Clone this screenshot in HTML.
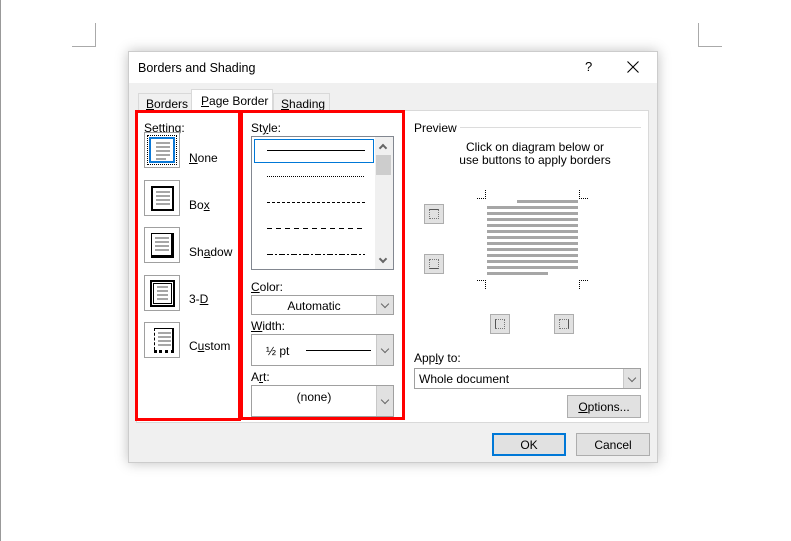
<!DOCTYPE html>
<html><head><meta charset="utf-8"><style>
*{box-sizing:border-box;margin:0;padding:0}
body{width:791px;height:541px;background:#fff;position:relative;overflow:hidden;font-family:"Liberation Sans",sans-serif;font-size:12px;color:#000}
.a{position:absolute}
u{text-decoration:underline}
.dlg{left:128px;top:51px;width:530px;height:412px;background:#f0f0f0;border:1px solid #ccc;box-shadow:0 0 12px rgba(0,0,0,.25)}
.combo{background:#fff;border:1px solid #a0a0a0}
.combo .dd{position:absolute;right:0;top:0;bottom:0;width:17px;background:#e1e1e1;border-left:1px solid #c8c8c8}
.combo .dd:after{content:"";position:absolute;left:5px;top:50%;margin-top:-4px;width:5px;height:5px;border-right:1px solid #666;border-bottom:1px solid #666;transform:rotate(45deg)}
.btn{background:#e1e1e1;border:1px solid #adadad;text-align:center}
.ic{width:36px;height:36px;border:1px solid #a0a0a0;background:#fff}
.gl{position:absolute;background:#a6a6a6;height:3px}
.pb{width:20px;height:20px;background:#e1e1e1;border:1px solid #adadad}
.pb i{position:absolute;left:4px;top:4px;width:10px;height:10px;border:1px dotted #777}
</style></head><body>
<div class="a" style="left:0;top:0;width:1px;height:541px;background:#999"></div>
<div class="a" style="left:95px;top:23px;width:1px;height:24px;background:#aaa"></div>
<div class="a" style="left:72px;top:46px;width:24px;height:1px;background:#aaa"></div>
<div class="a" style="left:698px;top:23px;width:1px;height:24px;background:#aaa"></div>
<div class="a" style="left:698px;top:46px;width:24px;height:1px;background:#aaa"></div>

<div class="a dlg">
 <div class="a" style="left:0;top:0;width:528px;height:31px;background:#fff"></div>
 <div class="a" style="left:9px;top:9px;font-size:12.5px">Borders and Shading</div>
 <div class="a" style="left:456px;top:7px;font-size:13px">?</div>
 <svg class="a" style="left:498px;top:9px" width="12" height="12"><path d="M0.5 0.5L11.5 11.5M11.5 0.5L0.5 11.5" stroke="#000" stroke-width="1.1"/></svg>
</div>
<!-- tabs -->
<div class="a" style="left:138px;top:93px;width:54px;height:18px;border:1px solid #d9d9d9;border-bottom:none;background:#f0f0f0;padding:3px 0 0 7px"><u>B</u>orders</div>
<div class="a" style="left:273px;top:93px;width:57px;height:18px;border:1px solid #d9d9d9;border-bottom:none;background:#f0f0f0;padding:3px 0 0 7px"><u>S</u>hading</div>
<div class="a" style="left:136px;top:110px;width:513px;height:313px;background:#fff;border:1px solid #d9d9d9"></div>
<div class="a" style="left:191px;top:89px;width:82px;height:23px;border:1px solid #d9d9d9;border-bottom:none;background:#fff;padding:4px 0 0 9px"><u>P</u>age Border</div>

<!-- red boxes -->
<div class="a" style="left:135px;top:110px;width:106px;height:311px;border:3px solid #f00"></div>
<div class="a" style="left:240px;top:110px;width:165px;height:310px;border:3px solid #f00"></div>

<div class="a" style="left:144px;top:121px">Setting:</div>
<!-- icons -->
<div class="a ic" style="left:144px;top:132px;padding:2px"><div style="width:30px;height:30px;border:1px dotted #000;padding:1px"><div style="width:26px;height:26px;border:2px solid #0a78d7;position:relative">
 <div class="gl" style="left:5px;top:3px;width:14px;height:2px"></div><div class="gl" style="left:5px;top:7px;width:14px;height:2px"></div><div class="gl" style="left:5px;top:11px;width:14px;height:2px"></div><div class="gl" style="left:5px;top:15px;width:14px;height:2px"></div><div class="gl" style="left:5px;top:19px;width:10px;height:2px"></div></div></div></div>
<div class="a" style="left:189px;top:151px"><u>N</u>one</div>

<div class="a ic" style="left:144px;top:180px"><div class="a" style="left:6px;top:5px;width:23px;height:25px;border:2px solid #000">
 <div class="gl" style="left:3px;top:3px;width:14px;height:2px"></div><div class="gl" style="left:3px;top:7px;width:14px;height:2px"></div><div class="gl" style="left:3px;top:11px;width:14px;height:2px"></div><div class="gl" style="left:3px;top:15px;width:14px;height:2px"></div></div></div>
<div class="a" style="left:189px;top:198px">Bo<u>x</u></div>

<div class="a ic" style="left:144px;top:227px"><div class="a" style="left:6px;top:5px;width:23px;height:25px;border:1px solid #000;border-right:3px solid #000;border-bottom:3px solid #000">
 <div class="gl" style="left:3px;top:3px;width:14px;height:2px"></div><div class="gl" style="left:3px;top:7px;width:14px;height:2px"></div><div class="gl" style="left:3px;top:11px;width:14px;height:2px"></div><div class="gl" style="left:3px;top:15px;width:14px;height:2px"></div></div></div>
<div class="a" style="left:189px;top:245px">Sh<u>a</u>dow</div>

<div class="a ic" style="left:144px;top:275px"><div class="a" style="left:5px;top:4px;width:25px;height:27px;border:2px solid #000;padding:1px"><div style="width:19px;height:21px;border:1px solid #000;position:relative">
 <div class="gl" style="left:3px;top:2px;width:11px;height:2px"></div><div class="gl" style="left:3px;top:6px;width:11px;height:2px"></div><div class="gl" style="left:3px;top:10px;width:11px;height:2px"></div><div class="gl" style="left:3px;top:14px;width:11px;height:2px"></div></div></div></div>
<div class="a" style="left:189px;top:292px">3-<u>D</u></div>

<div class="a ic" style="left:144px;top:322px"><div class="a" style="left:9px;top:5px;width:20px;height:22px;border-top:1px solid #000;border-right:2px solid #000;border-left:1px dashed #000">
 <div class="gl" style="left:3px;top:3px;width:13px;height:2px"></div><div class="gl" style="left:3px;top:7px;width:13px;height:2px"></div><div class="gl" style="left:3px;top:11px;width:13px;height:2px"></div><div class="gl" style="left:3px;top:15px;width:13px;height:2px"></div></div>
 <div class="a" style="left:9px;top:27px;width:20px;height:3px;border-top:3px dotted #000"></div></div>
<div class="a" style="left:189px;top:339px">C<u>u</u>stom</div>

<!-- style -->
<div class="a" style="left:251px;top:121px">St<u>y</u>le:</div>
<div class="a" style="left:251px;top:136px;width:143px;height:134px;border:1px solid #828790;background:#fff"></div>
<div class="a" style="left:254px;top:139px;width:120px;height:24px;border:1px solid #0078d7"></div>
<div class="a" style="left:267px;top:150px;width:98px;height:0;border-top:1px solid #000"></div>
<div class="a" style="left:267px;top:176px;width:97px;border-top:1px dotted #000"></div>
<div class="a" style="left:267px;top:202px;width:98px;border-top:1px dashed #000"></div>
<div class="a" style="left:267px;top:228px;width:98px;height:1px;background:repeating-linear-gradient(90deg,#000 0 5px,transparent 5px 9px)"></div>
<div class="a" style="left:267px;top:254px;width:98px;height:1px;background:repeating-linear-gradient(90deg,#000 0 6px,transparent 6px 8px,#000 8px 10px,transparent 10px 12px)"></div>
<div class="a" style="left:375px;top:137px;width:18px;height:132px;background:#f0f0f0"></div>
<div class="a" style="left:376px;top:155px;width:15px;height:20px;background:#cdcdcd"></div>
<div class="a" style="left:380px;top:145px;width:6px;height:6px;border-left:2px solid #666;border-top:2px solid #666;transform:rotate(45deg)"></div>
<div class="a" style="left:380px;top:256px;width:6px;height:6px;border-right:2px solid #666;border-bottom:2px solid #666;transform:rotate(45deg)"></div>

<div class="a" style="left:251px;top:280px"><u>C</u>olor:</div>
<div class="a combo" style="left:251px;top:295px;width:143px;height:20px"><div class="a" style="left:0;right:17px;top:3px;text-align:center">Automatic</div><div class="dd"></div></div>
<div class="a" style="left:251px;top:319px"><u>W</u>idth:</div>
<div class="a combo" style="left:251px;top:334px;width:143px;height:32px"><div class="a" style="left:14px;top:9px">½ pt</div><div class="a" style="left:54px;top:15px;width:65px;border-top:1px solid #000"></div><div class="dd"></div></div>
<div class="a" style="left:251px;top:370px">A<u>r</u>t:</div>
<div class="a combo" style="left:251px;top:385px;width:143px;height:32px"><div class="a" style="left:0;right:17px;top:4px;text-align:center">(none)</div><div class="dd"></div></div>

<!-- preview -->
<div class="a" style="left:414px;top:121px">Preview</div>
<div class="a" style="left:460px;top:127px;width:181px;height:1px;background:#dcdcdc"></div>
<div class="a" style="left:430px;top:141px;width:210px;text-align:center;line-height:13px">Click on diagram below or<br>use buttons to apply borders</div>
<div class="gl" style="left:517px;top:200px;width:61px"></div>
<div class="gl" style="left:487px;top:206px;width:91px"></div>
<div class="gl" style="left:487px;top:212px;width:91px"></div>
<div class="gl" style="left:487px;top:218px;width:91px"></div>
<div class="gl" style="left:487px;top:224px;width:91px"></div>
<div class="gl" style="left:487px;top:230px;width:91px"></div>
<div class="gl" style="left:487px;top:236px;width:91px"></div>
<div class="gl" style="left:487px;top:242px;width:91px"></div>
<div class="gl" style="left:487px;top:248px;width:91px"></div>
<div class="gl" style="left:487px;top:254px;width:91px"></div>
<div class="gl" style="left:487px;top:260px;width:91px"></div>
<div class="gl" style="left:487px;top:266px;width:91px"></div>
<div class="gl" style="left:487px;top:272px;width:61px"></div>
<div class="a" style="left:477px;top:190px;width:9px;height:9px;border-right:1px dotted #000;border-bottom:1px dotted #000"></div>
<div class="a" style="left:579px;top:190px;width:9px;height:9px;border-left:1px dotted #000;border-bottom:1px dotted #000"></div>
<div class="a" style="left:477px;top:280px;width:9px;height:9px;border-right:1px dotted #000;border-top:1px dotted #000"></div>
<div class="a" style="left:579px;top:280px;width:9px;height:9px;border-left:1px dotted #000;border-top:1px dotted #000"></div>
<div class="a pb" style="left:424px;top:204px"><i style="border-top:1px solid #555"></i></div>
<div class="a pb" style="left:424px;top:254px"><i style="border-bottom:1px solid #555"></i></div>
<div class="a pb" style="left:490px;top:314px"><i style="border-left:1px solid #555"></i></div>
<div class="a pb" style="left:554px;top:314px"><i style="border-right:1px solid #555"></i></div>

<div class="a" style="left:414px;top:351px">App<u>l</u>y to:</div>
<div class="a combo" style="left:414px;top:368px;width:227px;height:21px"><div class="a" style="left:4px;top:3px">Whole document</div><div class="dd"></div></div>
<div class="a btn" style="left:567px;top:395px;width:74px;height:23px;padding-top:4px"><u>O</u>ptions...</div>

<div class="a btn" style="left:492px;top:433px;width:74px;height:23px;border:2px solid #0078d7;padding-top:3px">OK</div>
<div class="a btn" style="left:576px;top:433px;width:74px;height:23px;padding-top:4px">Cancel</div>
</body></html>
